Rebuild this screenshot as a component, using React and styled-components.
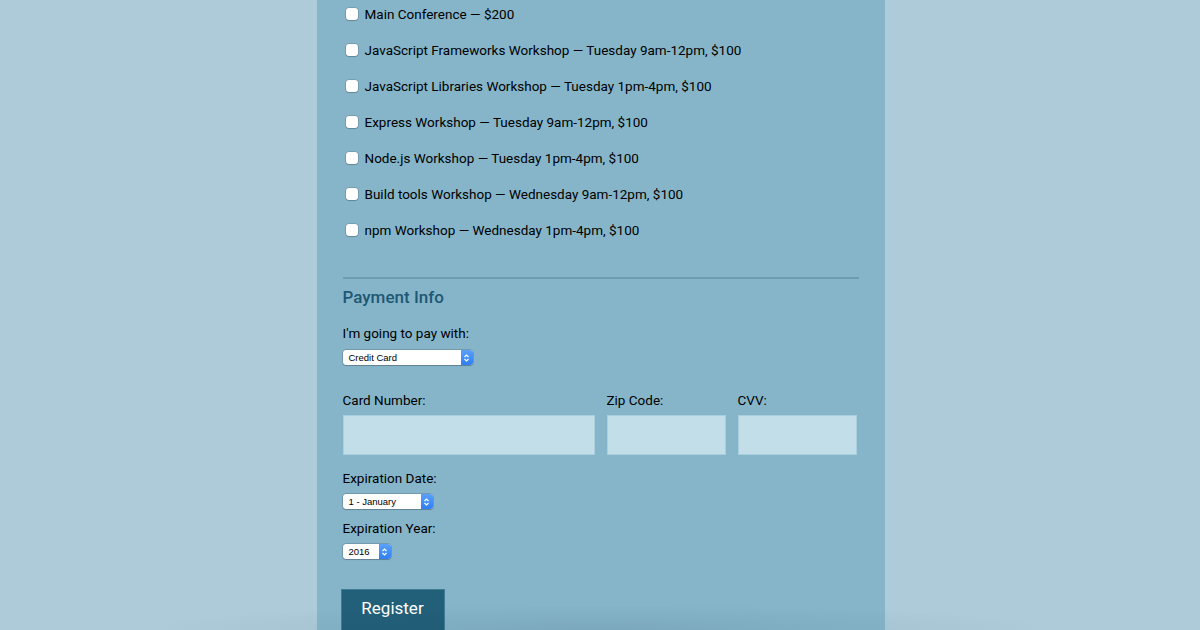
import React from 'react';
import styled, { createGlobalStyle } from 'styled-components';

const GlobalStyle = createGlobalStyle`
  html, body {
    margin: 0;
    padding: 0;
    height: 100%;
    overflow: hidden;
    background: #adcbd8;
    font-family: Roboto, "Liberation Sans", Arial, sans-serif;
  }
`;

const Page = styled.div`
  position: relative;
  height: 630px;
  display: flex;
  justify-content: center;
  overflow: hidden;
`;

const Panel = styled.div`
  width: 568px;
  margin-left: 1px;
  height: 660px;
  background: #86b5ca;
  padding: 4px 26px 0 26px;
  box-sizing: border-box;
`;

const Shade = styled.div`
  position: absolute;
  left: 0;
  right: 0;
  bottom: 0;
  height: 36px;
  pointer-events: none;
  background: radial-gradient(ellipse 460px 26px at 50% 100%, rgba(30, 60, 80, 0.11), rgba(30, 60, 80, 0));
`;

const Activities = styled.fieldset`
  border: 0;
  margin: 0;
  padding: 0;
  display: flex;
  flex-direction: column;
  gap: 16px;
`;

const CheckRow = styled.label`
  display: flex;
  align-items: center;
  height: 20px;
  font-size: 13.5px;
  color: #000;
  padding-left: 3px;
`;

const Box = styled.span`
  width: 12px;
  height: 12px;
  border-radius: 3px;
  background: #fff;
  box-shadow: 0 0 0 0.5px rgba(0, 0, 0, 0.25), 0 1px 1px rgba(0, 0, 0, 0.15);
  margin-right: 7px;
  flex: none;
`;

const Divider = styled.hr`
  border: 0;
  height: 2px;
  background: #6c9db3;
  margin: 37px 0 0 0;
`;

const Heading = styled.h2`
  margin: 8px 0 0 0;
  font-size: 17px;
  line-height: 20px;
  font-weight: 500;
  color: #1e5873;
`;

const Label = styled.div`
  font-size: 13.5px;
  line-height: 20px;
  color: #000;
  margin-top: ${p => p.mt || 0}px;
`;

const Select = styled.div`
  margin-top: ${p => p.mt || 0}px;
  width: ${p => p.w}px;
  height: 15px;
  display: flex;
  border-radius: 3px;
  background: #fff;
  box-shadow: 0 0 0 0.5px rgba(0, 0, 0, 0.3), 0 1px 1px rgba(0, 0, 0, 0.15);
  overflow: hidden;
  font-family: "Liberation Sans", Arial, sans-serif;
  font-size: 9.5px;
  color: #000;
`;

const SelectText = styled.span`
  flex: 1;
  line-height: 15px;
  padding-left: 6px;
  white-space: nowrap;
`;

const Arrow = styled.span`
  width: 12px;
  flex: none;
  background: linear-gradient(#5aa1fb, #2f7ef5);
  display: flex;
  align-items: center;
  justify-content: center;
`;

const FieldRow = styled.div`
  display: grid;
  grid-template-columns: 252px 119px 119px;
  column-gap: 12px;
  margin-top: 25px;
`;

const Field = styled.div`
  display: flex;
  flex-direction: column;
  gap: 5px;
`;

const Input = styled.div`
  height: 40px;
  background: #c2dee9;
  box-shadow: inset 0 0 0 1px #a9cedd;
`;

const Button = styled.button`
  margin-top: 30px;
  margin-left: -2px;
  width: 104px;
  height: 46px;
  background: #225f79;
  border: 1px solid #3f7d96;
  color: #fff;
  font-family: Roboto, "Liberation Sans", Arial, sans-serif;
  font-size: 17px;
  padding: 0 0 8px 0;
`;

const activities = [
  'Main Conference — $200',
  'JavaScript Frameworks Workshop — Tuesday 9am-12pm, $100',
  'JavaScript Libraries Workshop — Tuesday 1pm-4pm, $100',
  'Express Workshop — Tuesday 9am-12pm, $100',
  'Node.js Workshop — Tuesday 1pm-4pm, $100',
  'Build tools Workshop — Wednesday 9am-12pm, $100',
  'npm Workshop — Wednesday 1pm-4pm, $100'
];

const Chevrons = () => (
  <svg width="7" height="10" viewBox="0 0 7 10">
    <path d="M1.5 4 L3.5 2 L5.5 4 M1.5 6 L3.5 8 L5.5 6" fill="none" stroke="#fff" strokeWidth="1.2" />
  </svg>
);

const FakeSelect = ({ w, mt, value }) => (
  <Select w={w} mt={mt}>
    <SelectText>{value}</SelectText>
    <Arrow>
      <Chevrons />
    </Arrow>
  </Select>
);

export default function App() {
  return (
    <Page>
      <GlobalStyle />
      <Panel>
        <Activities>
          {activities.map(a => (
            <CheckRow key={a}>
              <Box />
              {a}
            </CheckRow>
          ))}
        </Activities>

        <Divider />
        <Heading>Payment Info</Heading>

        <Label mt={16}>I'm going to pay with:</Label>
        <FakeSelect w={130} mt={7} value="Credit Card" />

        <FieldRow>
          <Field>
            <Label>Card Number:</Label>
            <Input />
          </Field>
          <Field>
            <Label>Zip Code:</Label>
            <Input />
          </Field>
          <Field>
            <Label>CVV:</Label>
            <Input />
          </Field>
        </FieldRow>

        <Label mt={13}>Expiration Date:</Label>
        <FakeSelect w={90} mt={6} value="1 - January" />

        <Label mt={9}>Expiration Year:</Label>
        <FakeSelect w={48} mt={6} value="2016" />

        <Button>Register</Button>
      </Panel>
      <Shade />
    </Page>
  );
}
